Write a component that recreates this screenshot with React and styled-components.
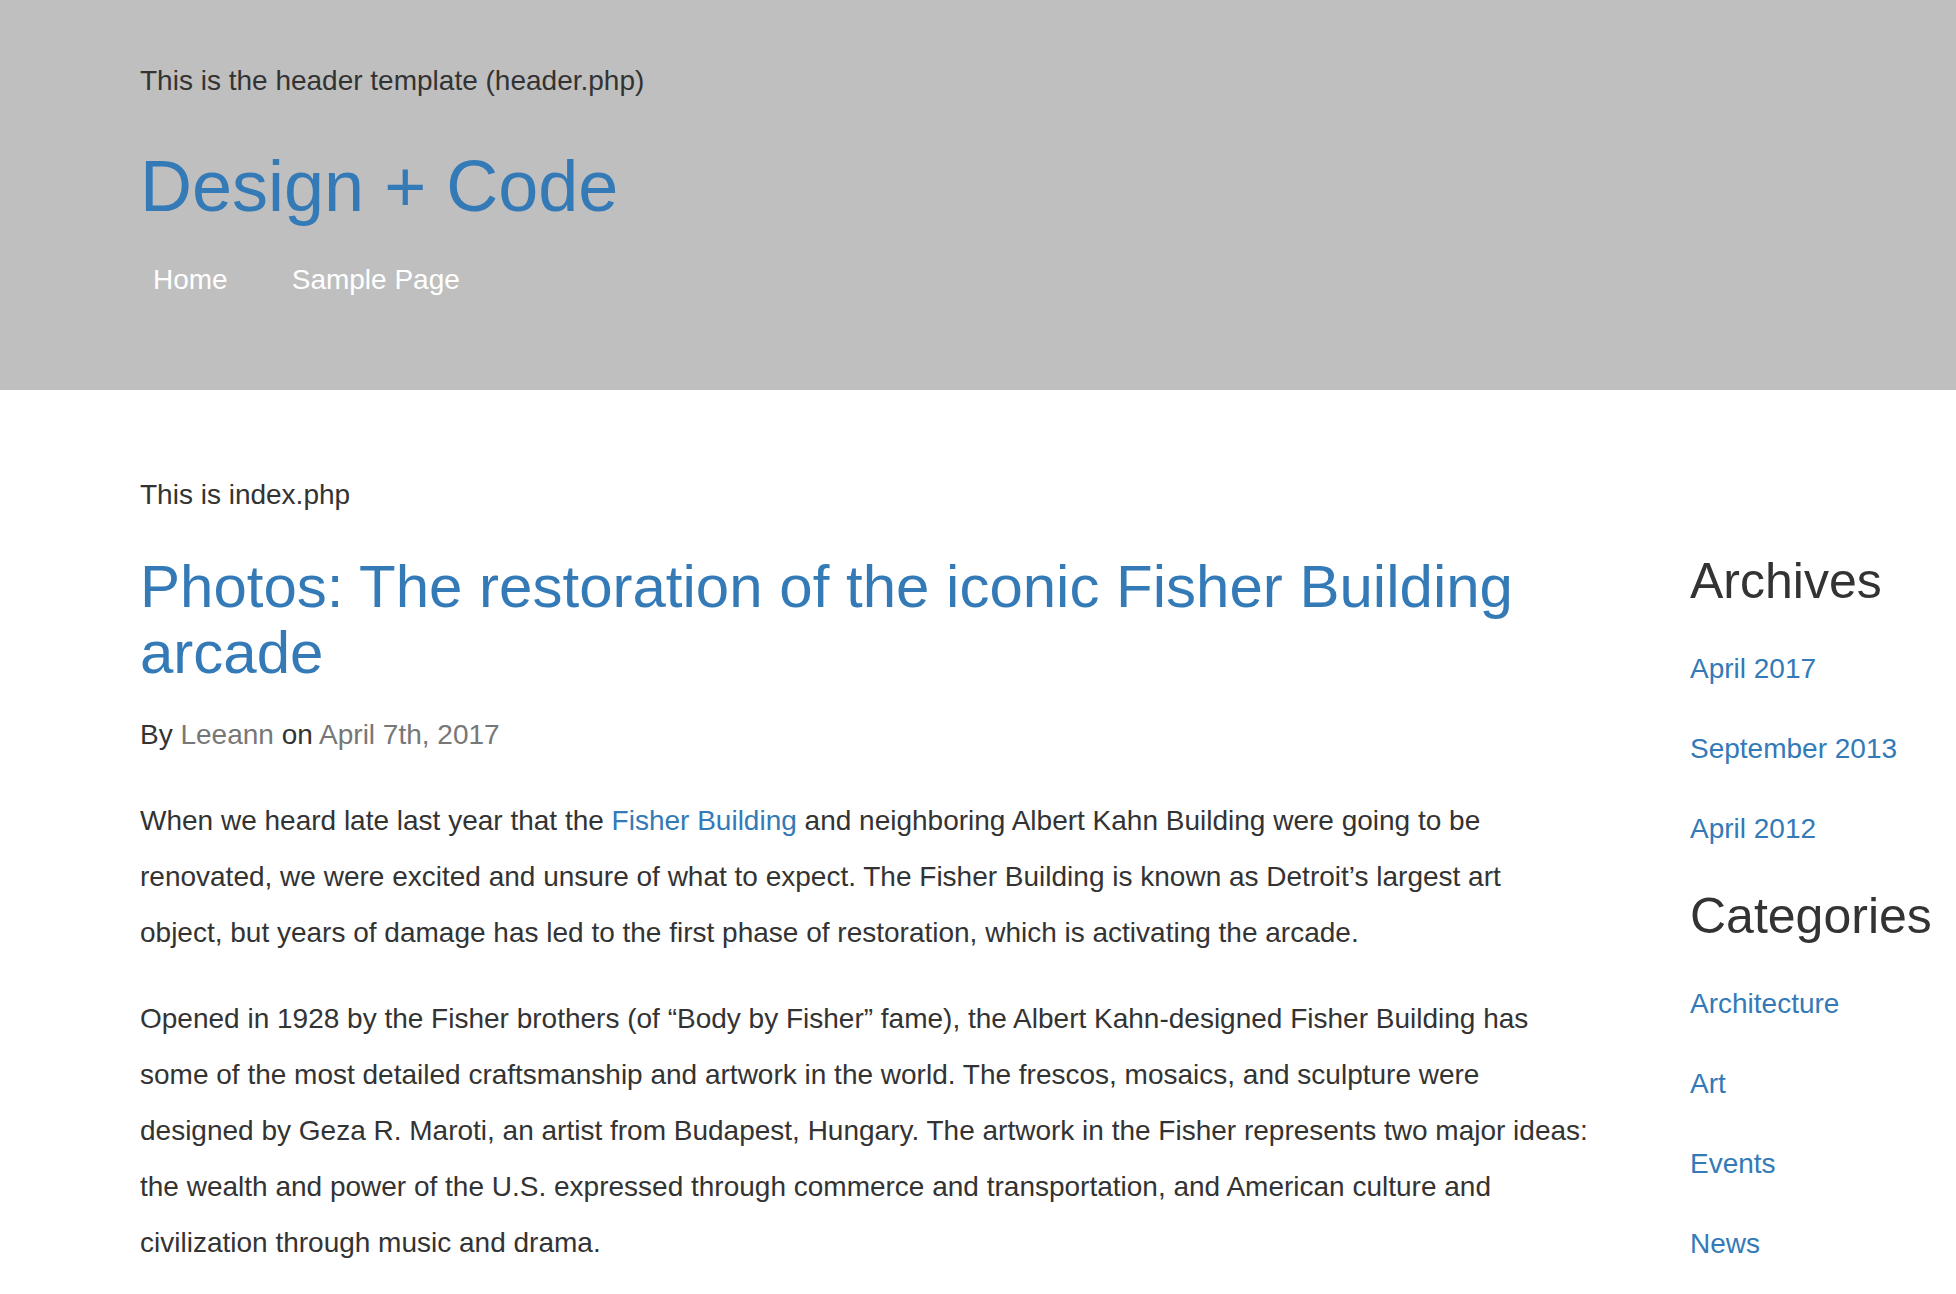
import styled, { createGlobalStyle } from "styled-components";

const GlobalStyle = createGlobalStyle`
    html, body {
        margin: 0;
        padding: 0;
        background: #ffffff;
    }
    body {
        font-family: "Liberation Sans", Arial, Helvetica, sans-serif;
        font-size: 28px;
        line-height: 40px;
        color: #333333;
    }
    a {
        color: #337ab7;
        text-decoration: none;
    }
`;

const Header = styled.header`
    background: #bfbfbf;
    height: 390px;
    box-sizing: border-box;
    padding: 61px 140px 0;
    p {
        margin: 0;
    }
`;

const SiteTitle = styled.h1`
    margin: 46px 0 34px;
    font-size: 72px;
    font-weight: 400;
    line-height: 79px;
    a {
        color: #337ab7;
    }
`;

const Nav = styled.ul`
    display: flex;
    gap: 64px;
    margin: 0;
    padding: 0 0 0 13px;
    list-style: none;
    a {
        color: #ffffff;
    }
`;

const Main = styled.main`
    padding: 85px 0 0 140px;
    display: flex;
    flex-direction: column;
`;

const Intro = styled.p`
    margin: 0 0 39px;
`;

const Row = styled.div`
    display: flex;
    align-items: flex-start;
`;

const Post = styled.article`
    width: 1460px;
    flex-shrink: 0;
`;

const PostTitle = styled.h2`
    margin: 0 0 29px;
    font-size: 60px;
    font-weight: 400;
    line-height: 66px;
`;

const Byline = styled.p`
    margin: 0 0 38px;
    a {
        color: #777777;
    }
`;

const Paragraph = styled.p`
    margin: 0 0 30px;
    line-height: 56px;
`;

const Sidebar = styled.aside`
    margin-left: 90px;
    flex: 1;
    h3 {
        margin: 0 0 40px;
        font-size: 50px;
        font-weight: 400;
        line-height: 55px;
    }
    ul {
        margin: 0;
        padding: 0;
        list-style: none;
    }
    li {
        margin-bottom: 40px;
    }
`;

const archives = ["April 2017", "September 2013", "April 2012"];
const categories = ["Architecture", "Art", "Events", "News"];

const App = () => {
    return (
        <>
            <GlobalStyle />
            <Header>
                <p>This is the header template (header.php)</p>
                <SiteTitle>
                    <a href="#">Design + Code</a>
                </SiteTitle>
                <Nav>
                    <li>
                        <a href="#">Home</a>
                    </li>
                    <li>
                        <a href="#">Sample Page</a>
                    </li>
                </Nav>
            </Header>
            <Main>
                <Intro>This is index.php</Intro>
                <Row>
                    <Post>
                        <PostTitle>
                            <a href="#">Photos: The restoration of the iconic Fisher Building arcade</a>
                        </PostTitle>
                        <Byline>
                            By <a href="#">Leeann</a> on <a href="#">April 7th, 2017</a>
                        </Byline>
                        <Paragraph>
                            When we heard late last year that the <a href="#">Fisher Building</a> and neighboring
                            Albert Kahn Building were going to be renovated, we were excited and unsure of what to
                            expect. The Fisher Building is known as Detroit’s largest art
                            <br />
                            object, but years of damage has led to the first phase of restoration, which is
                            activating the arcade.
                        </Paragraph>
                        <Paragraph>
                            Opened in 1928 by the Fisher brothers (of “Body by Fisher” fame), the Albert Kahn-designed
                            Fisher Building has some of the most detailed craftsmanship and artwork in the world. The
                            frescos, mosaics, and sculpture were designed by Geza R. Maroti, an artist from Budapest,
                            Hungary. The artwork in the Fisher represents two major ideas: the wealth and power of the
                            U.S. expressed through commerce and transportation, and American culture and civilization
                            through music and drama.
                        </Paragraph>
                    </Post>
                    <Sidebar>
                        <h3>Archives</h3>
                        <ul>
                            {archives.map((item) => (
                                <li key={item}>
                                    <a href="#">{item}</a>
                                </li>
                            ))}
                        </ul>
                        <h3>Categories</h3>
                        <ul>
                            {categories.map((item) => (
                                <li key={item}>
                                    <a href="#">{item}</a>
                                </li>
                            ))}
                        </ul>
                    </Sidebar>
                </Row>
            </Main>
        </>
    );
};

export default App;
